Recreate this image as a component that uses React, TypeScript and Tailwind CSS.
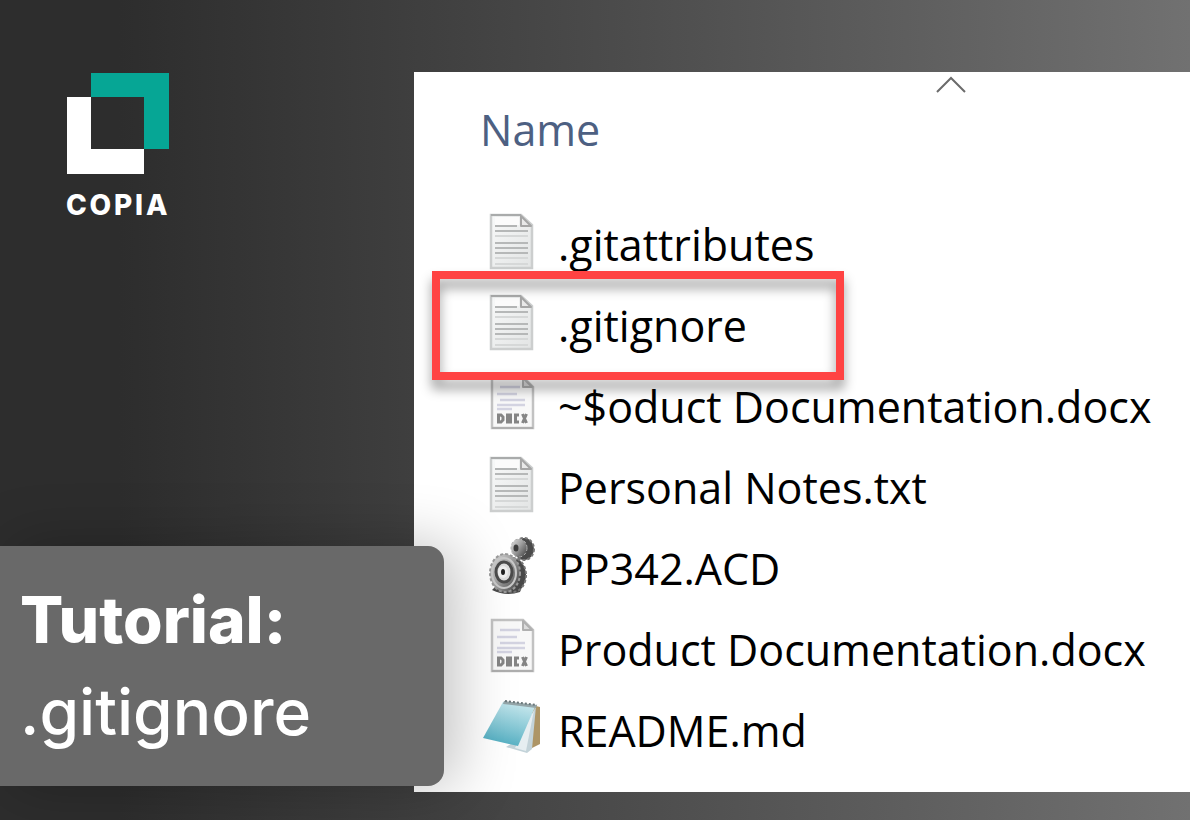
import type { ReactNode } from "react";

type IconKind = "text" | "docx" | "gears" | "notepad";

const files: { name: string; icon: IconKind; highlighted?: boolean }[] = [
  { name: ".gitattributes", icon: "text" },
  { name: ".gitignore", icon: "text", highlighted: true },
  { name: "~$oduct Documentation.docx", icon: "docx" },
  { name: "Personal Notes.txt", icon: "text" },
  { name: "PP342.ACD", icon: "gears" },
  { name: "Product Documentation.docx", icon: "docx" },
  { name: "README.md", icon: "notepad" },
];

function IconFrame({ children }: { children: ReactNode }) {
  return (
    <svg viewBox="0 0 60 60" className="size-[60px] shrink-0" aria-hidden="true">
      {children}
    </svg>
  );
}

function TextIcon() {
  return (
    <IconFrame>
      <defs>
        <linearGradient id="sheet" x1="0" y1="0" x2="1" y2="1">
          <stop offset="0" stopColor="#f8f9f9" />
          <stop offset="1" stopColor="#e2e4e4" />
        </linearGradient>
      </defs>
      <path d="M9 3H39L50 13V56H9Z" fill="url(#sheet)" stroke="#cccece" strokeWidth="2.500" />
      <path d="M9 3H39" stroke="#a9abab" strokeWidth="2" />
      <path d="M13 5H37V13H13Z" fill="#fbfbfb" />
      <path d="M39 4V14H49Z" fill="#e9e9e9" stroke="#a6a6a6" strokeWidth="2" strokeLinejoin="round" />
      <path d="M13 14H35" stroke="#b3b5b5" strokeWidth="2" />
      <path d="M13 19H46M13 31H46M13 36H46M13 41H46" stroke="#b6b8b8" strokeWidth="2" />
      <path d="M13 24H46M13 46H46M13 52H46" stroke="#d6d8d8" strokeWidth="2" />
    </IconFrame>
  );
}

function DocxIcon() {
  return (
    <IconFrame>
      <path d="M10 3H41L51 13V54H10Z" fill="#f8f8f8" stroke="#c2c2c2" strokeWidth="2.500" />
      <path d="M10 54H51" stroke="#aeaeae" strokeWidth="2" />
      <path d="M41 4V13H50Z" fill="#dcdcdc" stroke="#b0b0b0" strokeWidth="2" strokeLinejoin="round" />
      <path d="M18 13H38M15 20H35M18 26H43M15 31H43M15 35H30" stroke="#d3d3e1" strokeWidth="2.500" />
      <g fill="none" stroke="#858585" strokeWidth="3">
        <path d="M16.500 41H19L21 43V46L19 48H16.500Z" />
        <path d="M25.500 41H28.500V48H25.500Z" />
        <path d="M37 41H33.500V48H37" />
        <path d="M40.500 40L44.500 49M44.500 40L40.500 49" />
      </g>
    </IconFrame>
  );
}

function GearsIcon() {
  return (
    <IconFrame>
      <defs>
        <linearGradient id="metal" x1="0" y1="0" x2="1" y2="0.8">
          <stop offset="0" stopColor="#e0e0e0" />
          <stop offset="0.5" stopColor="#a2a2a2" />
          <stop offset="1" stopColor="#4c4c4c" />
        </linearGradient>
      </defs>
      <path d="M10 54Q24 61 38 56L42 46L24 40Z" fill="#4a4a4a" />
      <ellipse cx="42" cy="13" rx="10" ry="11" fill="#4a4a4a" stroke="#777777" strokeWidth="2" strokeDasharray="3 2" />
      <ellipse cx="37" cy="12" rx="8" ry="9" fill="url(#metal)" stroke="#b0b0b0" strokeWidth="1" strokeDasharray="3 2" />
      <ellipse cx="34" cy="12" rx="2.500" ry="3.500" fill="#3c3c3c" />
      <ellipse cx="31" cy="39" rx="13" ry="17" fill="#484848" stroke="#777777" strokeWidth="2" strokeDasharray="3 2" />
      <ellipse cx="23" cy="37" rx="15" ry="19" fill="url(#metal)" stroke="#999999" strokeWidth="2" strokeDasharray="3 2" />
      <ellipse cx="22" cy="37" rx="12" ry="15" fill="none" stroke="#c9c9c9" strokeWidth="2" />
      <ellipse cx="22" cy="36" rx="8" ry="10" fill="#dedede" stroke="#4b4b4b" strokeWidth="3" />
      <ellipse cx="21" cy="36" rx="5" ry="6" fill="#f0f0f0" />
      <ellipse cx="21" cy="36" rx="2" ry="3" fill="#222222" />
    </IconFrame>
  );
}

function NotepadIcon() {
  return (
    <IconFrame>
      <defs>
        <linearGradient id="cover" x1="0.6" y1="0" x2="0.3" y2="1">
          <stop offset="0" stopColor="#c5e6ec" />
          <stop offset="0.6" stopColor="#7fc4d2" />
          <stop offset="1" stopColor="#4eacc0" />
        </linearGradient>
      </defs>
      <path d="M50 7L58 9V46L50 50Z" fill="#ad9566" />
      <path d="M54 8L50 51L45 55L24 49L38 40Z" fill="#c3d3d9" />
      <path d="M52 12L44 53L33 50Z" fill="#e6eef1" />
      <path d="M21 4L53 9L36 48L1 40Z" fill="url(#cover)" />
      <path d="M22 3L55 7L54 10L21 6Z" fill="#94a5a8" />
      <path d="M23 3L55 7" stroke="#6c797c" strokeWidth="2" strokeDasharray="2 2" />
    </IconFrame>
  );
}

const icons: Record<IconKind, () => ReactNode> = {
  text: TextIcon,
  docx: DocxIcon,
  gears: GearsIcon,
  notepad: NotepadIcon,
};

function Logo() {
  return (
    <div className="ml-[66px] flex w-[104px] flex-col items-start">
      <svg viewBox="0 0 104 102" className="w-full" aria-hidden="true">
        <path d="M25 1H103V77H78V25H25Z" fill="#06a695" />
        <path d="M1 25H25V77H78V102H1Z" fill="#ffffff" />
      </svg>
      <span className="mt-[13px] text-[28px] leading-9 font-extrabold tracking-widest text-white">COPIA</span>
    </div>
  );
}

function FileRow({ name, icon, highlighted }: (typeof files)[number]) {
  const Icon = icons[icon];
  return (
    <tr>
      <td className="relative p-0 pl-[68px]">
        <div className="flex h-[81px] items-center gap-4">
          <Icon />
          <span className="pt-2">{name}</span>
        </div>
        {highlighted && (
          <div className="absolute -top-[11px] left-[18px] z-10 h-[109px] w-[412px] border-8 border-[#ff4343] drop-shadow-[0_9px_6px_rgba(0,0,0,0.4)]" />
        )}
      </td>
    </tr>
  );
}

export default function App() {
  return (
    <main className="grid min-h-screen grid-cols-[414px_minmax(0,1fr)] bg-linear-to-r from-[#2d2d2d] from-10% to-[#717171] pt-[72px] pb-7 font-['Inter',sans-serif]">
      <div className="flex flex-col justify-between">
        <Logo />
        <h1 className="relative z-10 -mr-[30px] mb-[6px] rounded-r-2xl bg-[#696969] py-7 pr-8 pl-5 text-[64px] leading-[92px] font-medium text-white shadow-[12px_0_60px_rgba(0,0,0,0.25)]">
          <strong className="block font-extrabold">Tutorial:</strong>
          .gitignore
        </h1>
      </div>
      <section className="overflow-hidden bg-white">
        <table className="w-full border-collapse text-left font-['Open_Sans',sans-serif] text-[43px] whitespace-nowrap text-black">
          <thead>
            <tr>
              <th className="relative h-[129px] p-0 pl-[66px] align-top font-normal text-[#4d6082]">
                <span className="block pt-7 leading-[60px]">Name</span>
                <svg viewBox="0 0 30 18" className="absolute top-1 left-[522px] h-[18px] w-[30px]" aria-hidden="true">
                  <path d="M1 16L15 2L29 16" fill="none" stroke="#6b6b6b" strokeWidth="2" />
                </svg>
              </th>
            </tr>
          </thead>
          <tbody>
            {files.map((file) => (
              <FileRow key={file.name} {...file} />
            ))}
          </tbody>
        </table>
      </section>
    </main>
  );
}
